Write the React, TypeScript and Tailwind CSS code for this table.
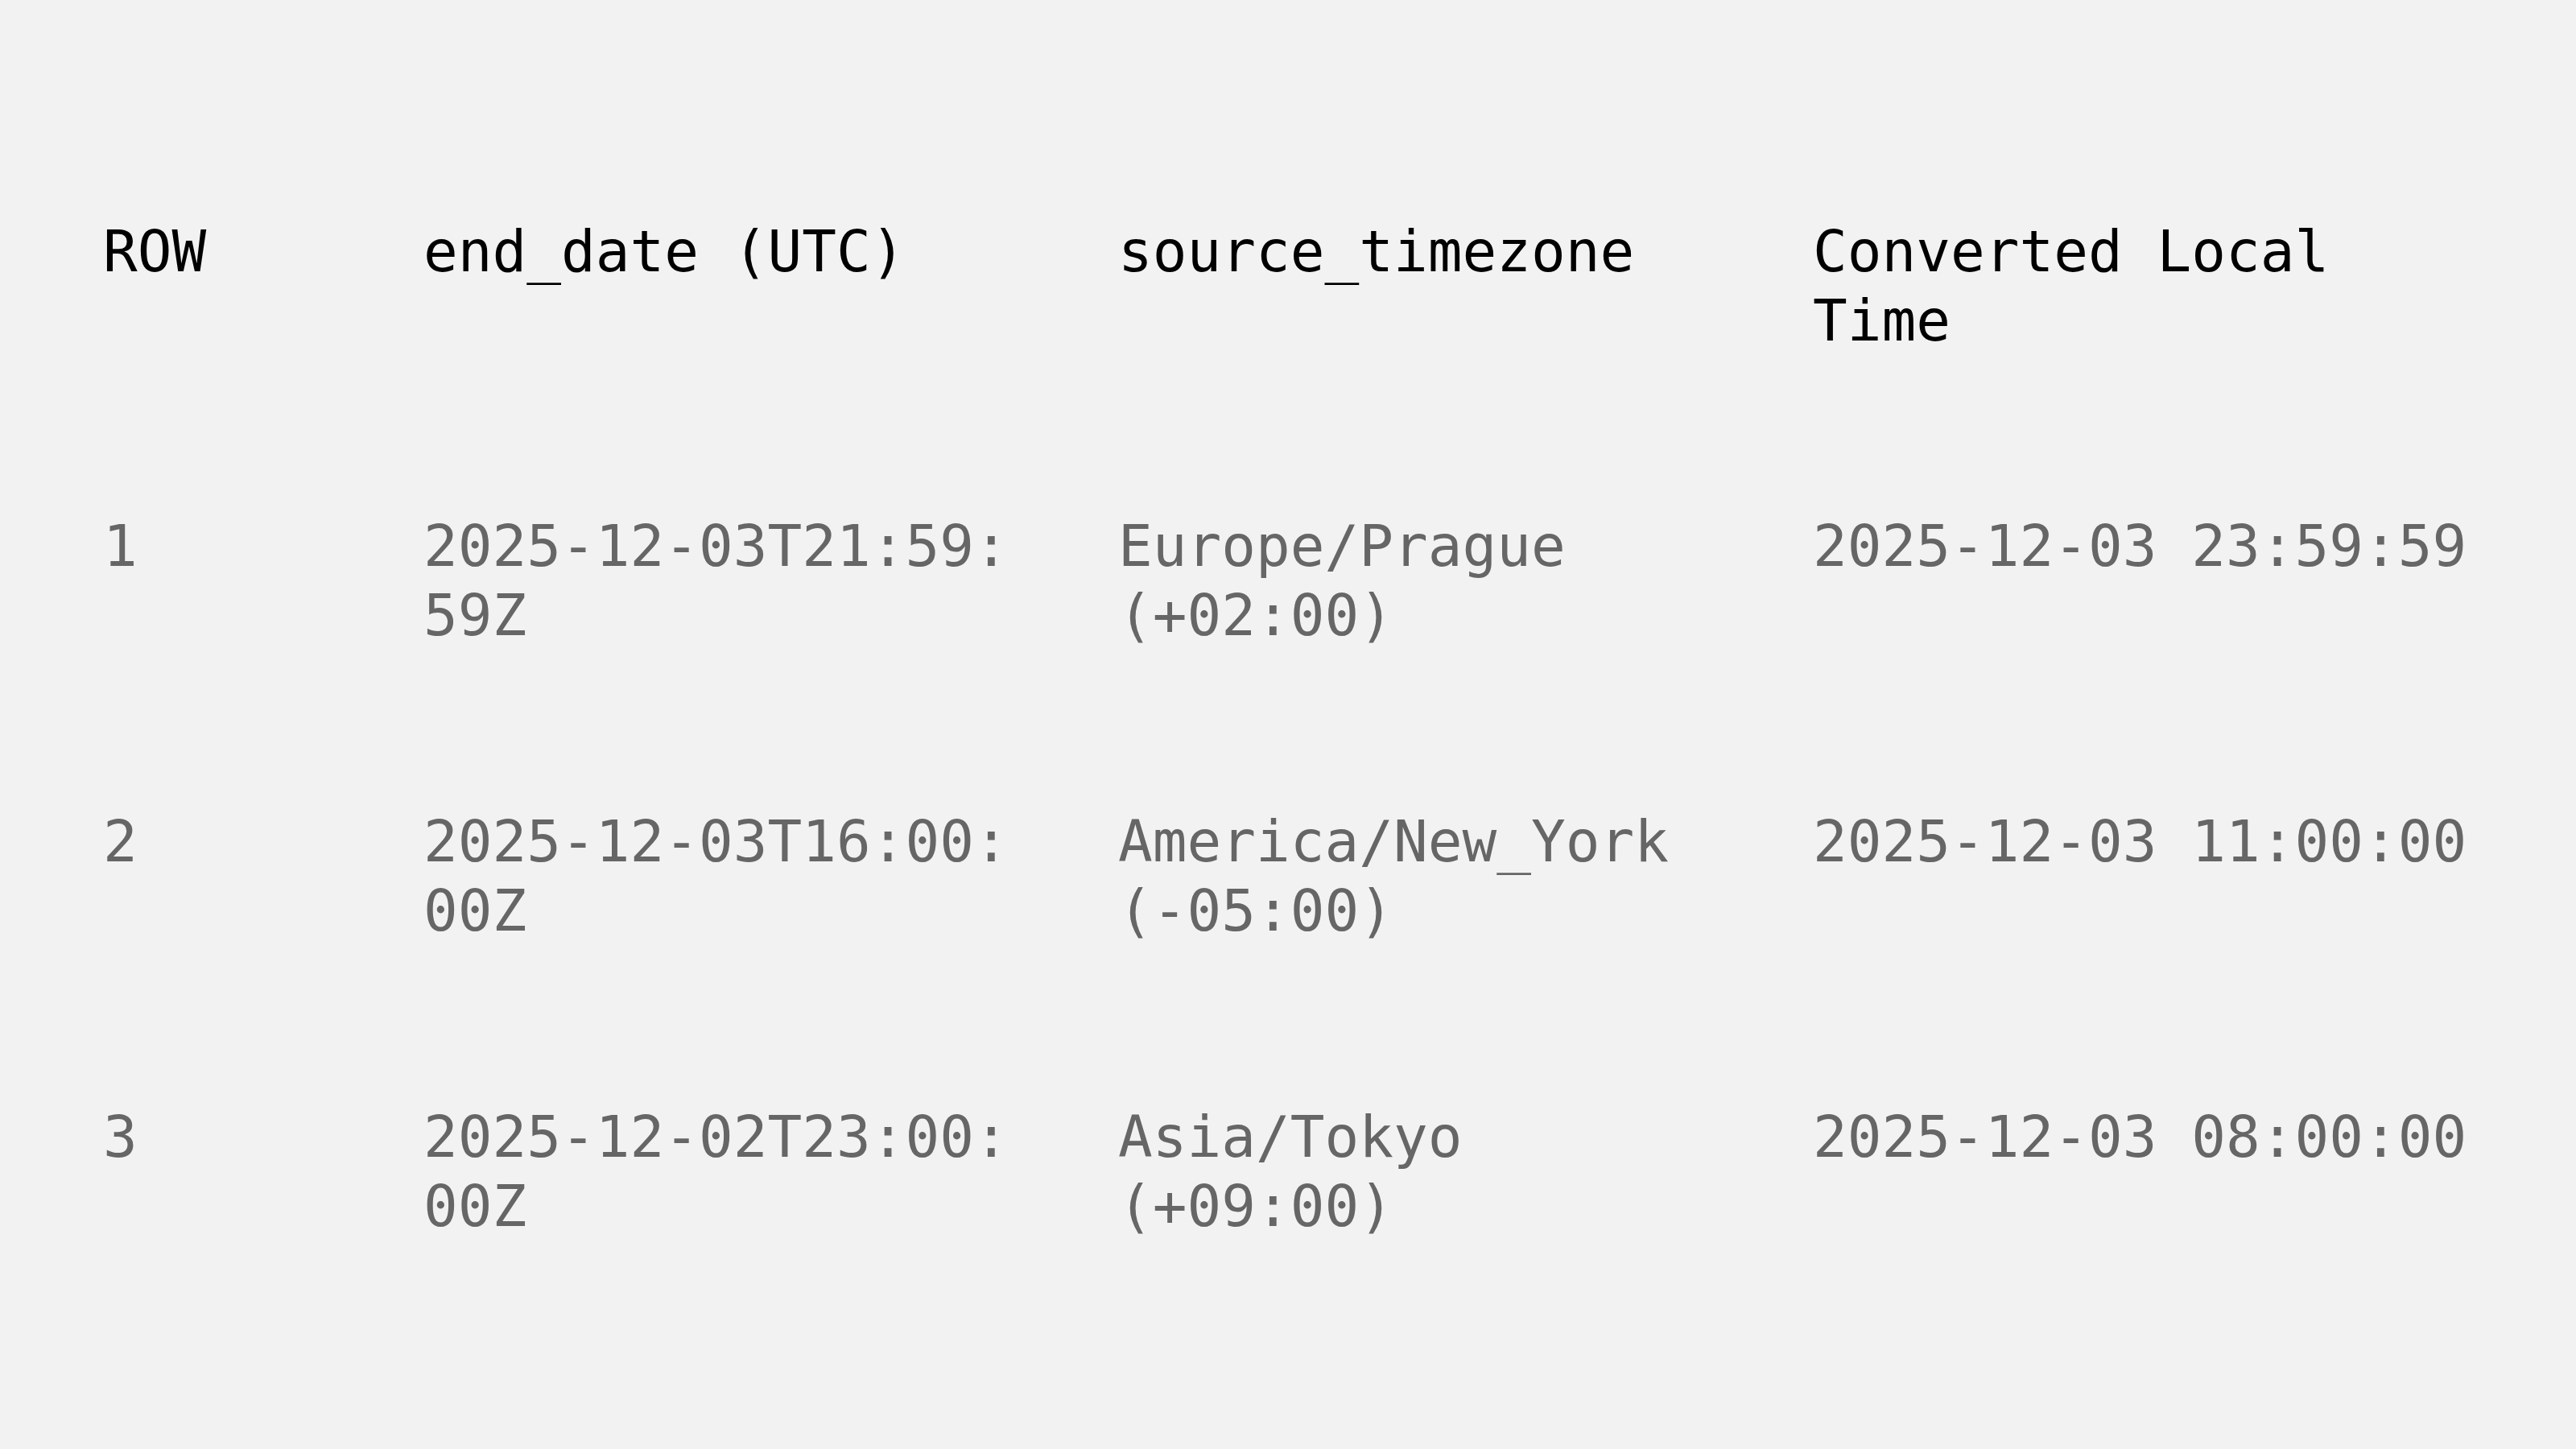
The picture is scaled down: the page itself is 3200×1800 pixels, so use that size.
const rows = [
  { n: "1", utc: "2025-12-03T21:59:59Z", tz: "Europe/Prague (+02:00)", local: "2025-12-03 23:59:59" },
  { n: "2", utc: "2025-12-03T16:00:00Z", tz: "America/New_York (-05:00)", local: "2025-12-03 11:00:00" },
  { n: "3", utc: "2025-12-02T23:00:00Z", tz: "Asia/Tokyo (+09:00)", local: "2025-12-03 08:00:00" },
];

export default function App() {
  return (
    <div
      className="min-h-screen w-full bg-[#f2f2f2] pl-[128px] pr-[120px] pt-[173px] text-[71px] leading-[86px]"
      style={{ fontFamily: '"DejaVu Sans Mono", "Liberation Mono", monospace' }}
    >
      <div className="grid grid-cols-[398px_863px_863px_1fr]">
        <div className="py-[97px] text-black">ROW</div>
        <div className="py-[97px] pr-[113px] text-black">end_date (UTC)</div>
        <div className="py-[97px] pr-[113px] text-black">source_timezone</div>
        <div className="py-[97px] text-black">Converted Local Time</div>
        {rows.map((r) => (
          <div key={r.n} className="contents text-[#666666]">
            <div className="h-[367px] py-[97px]">{r.n}</div>
            <div className="h-[367px] py-[97px] pr-[113px] break-all">{r.utc}</div>
            <div className="h-[367px] py-[97px] pr-[113px]">{r.tz}</div>
            <div className="h-[367px] py-[97px] whitespace-nowrap">{r.local}</div>
          </div>
        ))}
      </div>
    </div>
  );
}
